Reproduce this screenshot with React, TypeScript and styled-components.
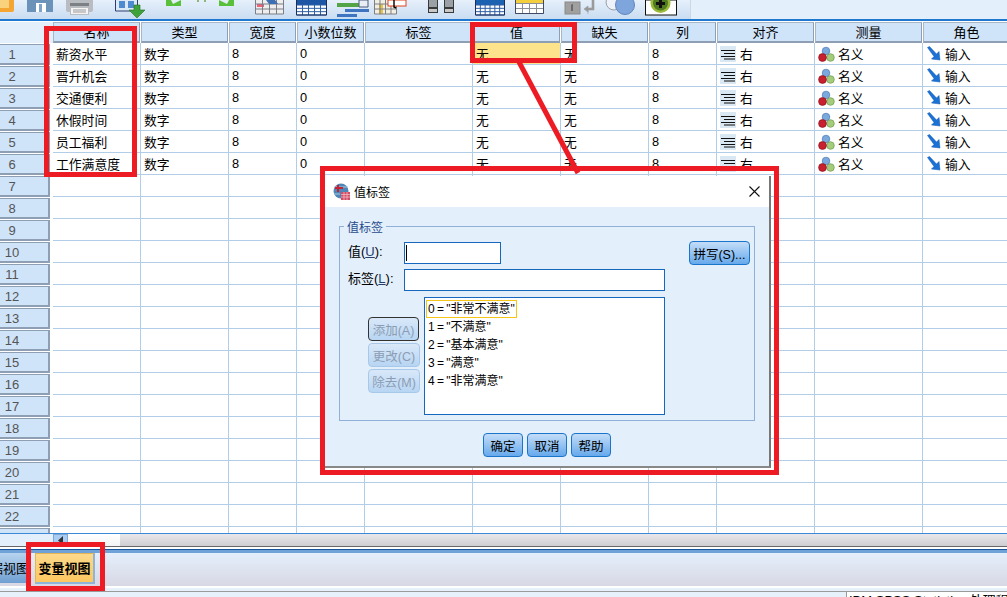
import React from "react";
import styled, { createGlobalStyle } from "styled-components";

const Global = createGlobalStyle`
  html, body { margin: 0; padding: 0; background: #fff; overflow: hidden; }
  * { box-sizing: border-box; }
  body { font-family: "Liberation Sans", "Noto Sans CJK SC", sans-serif; font-size: 13px; color: #000; }
`;

const COLS = [53, 88, 88, 68, 68, 108, 88, 88, 68, 98, 108, 88];

const Page = styled.div`
  position: relative; width: 1007px; height: 597px; overflow: hidden;
  display: flex; flex-direction: column;
`;
const Toolbar = styled.div`
  height: 21px; flex: none; display: flex; overflow: hidden;
  background: #e3effb; border-bottom: 2px solid #1f78cf;
`;
const ToolGroup = styled.div`
  width: 691px; height: 19px; display: flex; align-items: flex-start;
  background: linear-gradient(#e6f0fb, #c9dcf1); border-right: 1px solid #cfd8e2;
`;
const ToolIcon = styled.svg<{ $gap: number }>`
  flex: none; height: 20px; margin-left: ${p => p.$gap}px; display: block;
`;
const Sheet = styled.div`
  height: 512px; flex: none; overflow: hidden; display: grid;
  grid-template-columns: ${COLS.map(c => c + "px").join(" ")};
  grid-template-rows: 22px;
  grid-auto-rows: 22px;
  width: 1011px;
  background: #fff;
`;
const Corner = styled.div`
  margin-top: 1px; background: #e3effb;
`;
const HeadCell = styled.div`
  margin: 1px 1px 0 0; background: #cfe3f9;
  border: 1px solid #8f9fb3; border-top-color: #a9b6c5; border-left-color: #a9b6c5;
  border-bottom-width: 2px; padding-top: 1px;
  display: flex; align-items: center; justify-content: center;
  font-size: 13px; line-height: 18px;
`;
const RowHead = styled.div`
  margin: 1px 1px 0 -2px; background: #cfe3f9;
  border: 1px solid #8f9fb3; border-right-width: 2px; border-bottom-width: 2px;
  color: #555; font-size: 13px; line-height: 19px;
  padding-left: 1px; width: 52px;
`;
const RowNum = styled.span`
  display: block; width: 22px; padding-left: 2px; text-align: center;
`;
const Cell = styled.div<{ $selected?: boolean }>`
  border-right: 1px solid #b1cde8; border-bottom: 1px solid #b1cde8;
  background: ${p => (p.$selected ? "#fde38c" : "#fff")};
  display: flex; align-items: center; gap: 4px;
  padding-left: 3px; font-size: 12.8px; white-space: nowrap; overflow: hidden;
`;
const ScrollRow = styled.div`
  height: 13px; flex: none; display: flex;
  border-top: 1px solid #3b8ad9;
  background: linear-gradient(#e9e7e9, #cfced3);
`;
const ScrollCorner = styled.div`
  width: 53px; background: #e3effb;
`;
const ScrollButton = styled.div`
  width: 15px; background: #a9cdf2; border: 1px solid #7fa9d4;
  display: flex; align-items: center; justify-content: center;
`;
const ScrollThumb = styled.div`
  width: 52px; background: linear-gradient(#fff, #f4f4f6);
`;
const TabBar = styled.div`
  flex: none; height: 42px; display: flex; align-items: flex-start; gap: 5px;
  border-top: 1px solid #666;
  background: linear-gradient(#fff 0 2px, #17539b 2px 3px, #6fa3d8 3px 6px, #e3effb 6px, #d8d8e4 39px, #fff 39px);
  padding-top: 6px;
`;
const DataTab = styled.div`
  width: 30px; height: 30px; overflow: hidden; direction: rtl;
  background: linear-gradient(#b7d3ef, #6f9fd2);
  border-right: 1px solid #7fa9d4;
  display: flex; align-items: center; font-size: 13px; white-space: nowrap;
  padding-bottom: 2px;
`;
const VarTab = styled.div`
  width: 60px; height: 31px;
  background: linear-gradient(#fdd98a, #fdc760);
  border: 1px solid #e6b355; border-bottom: 2px solid #8fb4da; border-right: 2px solid #8fb4da;
  display: flex; align-items: center; justify-content: center;
  font-size: 13px; font-weight: 700; white-space: nowrap;
  padding-bottom: 1px;
`;
const StatusBar = styled.div`
  flex: 1; display: flex; padding-top: 3px; background: #e6f1fb;
`;
const StatusLeft = styled.div`
  width: 846px; flex: none; border-top: 1px solid #9a9a9a;
`;
const StatusRight = styled.div`
  flex: 1; min-width: 0; overflow: hidden; background: #fff;
  border-top: 1px solid #9a9a9a; border-left: 1px solid #9a9a9a;
  padding: 0 0 0 2px; font-size: 13px; line-height: 18px; white-space: nowrap;
`;

const Dialog = styled.div`
  position: absolute; left: 325px; top: 176px; width: 446px; height: 292px;
  background: #e3effb; border-right: 2px solid #777; border-bottom: 2px solid #888;
  display: flex; flex-direction: column;
`;
const TitleBar = styled.div`
  height: 31px; flex: none; background: #fff; display: flex; align-items: center;
  padding: 0 9px 0 8px; gap: 3px; font-size: 12px;
`;
const CloseBtn = styled.svg`
  margin-left: auto; width: 11px; height: 11px; display: block;
`;
const Group = styled.div`
  position: relative; margin: 19px 14px 0 14px; height: 195px;
  border: 1px solid #8fb0d8; padding: 15px 4px 0 0;
  display: flex; flex-direction: column;
`;
const Legend = styled.div`
  position: absolute; left: 4px; top: -5px; padding: 0 3px; background: #e3effb;
  color: #2a4b8c; font-size: 12px; line-height: 13px;
`;
const FieldRow = styled.div`
  display: flex; align-items: flex-start; height: 24px; margin-bottom: 3px;
`;
const FieldLabel = styled.label`
  width: 64px; padding-left: 8px; font-size: 13px; line-height: 20px; white-space: nowrap; flex: none;
`;
const Mnemonic = styled.span`
  color: #243f6b; text-decoration: underline; text-decoration-thickness: 1px;
`;
const TextBox = styled.div<{ $w: number }>`
  width: ${p => p.$w}px; height: 22px; background: #fff; border: 1px solid #1667bd;
  padding: 2px 1px;
`;
const Caret = styled.div`
  width: 1px; height: 16px; background: #000;
`;
const ListRow = styled.div`
  display: flex; align-items: flex-start; margin-top: 1px;
`;
const SideButtons = styled.div`
  margin: 20px 4px 0 28px; width: 52px; display: flex; flex-direction: column; gap: 2px;
`;
const Btn = styled.div<{ $w: number; $off?: boolean; $focus?: boolean }>`
  width: ${p => p.$w}px; height: 24px; flex: none; border-radius: 4px;
  display: flex; align-items: center; justify-content: center;
  font-size: 12.5px; white-space: nowrap;
  color: ${p => (p.$off ? "#8c9db3" : "#000")};
  background: ${p => p.$off ? "linear-gradient(#d9e8f9, #b7d5f3)" : "linear-gradient(#c4ddf8, #66a9ec)"};
  border: 1px solid ${p => (p.$focus ? "#333" : p.$off ? "#a8c8ea" : "#1a74c9")};
`;
const ListBox = styled.div`
  width: 241px; height: 118px; background: #fff; border: 1px solid #1667bd;
  padding: 2px 1px; display: flex; flex-direction: column;
`;
const ListItem = styled.div<{ $active?: boolean }>`
  height: 18px; line-height: 16px; font-size: 12px; word-spacing: -1px; padding: 0 1px; white-space: nowrap;
  align-self: flex-start;
  border: 1px solid ${p => (p.$active ? "#f5c518" : "transparent")};
`;
const Footer = styled.div`
  display: flex; justify-content: center; gap: 4px; margin-top: 12px;
`;
const SpellBtn = styled(Btn)`
  margin-left: auto; margin-top: -1px;
`;
const Frame = styled.div<{ $x: number; $y: number; $w: number; $h: number }>`
  position: absolute; left: ${p => p.$x}px; top: ${p => p.$y}px;
  width: ${p => p.$w}px; height: ${p => p.$h}px;
  border: 5px solid #ed1c24; pointer-events: none;
`;
const Connector = styled.svg`
  position: absolute; left: 510px; top: 60px; width: 80px; height: 115px; pointer-events: none;
`;

const AlignIcon = () => (
  <svg width="16" height="16" viewBox="0 0 16 16" style={{ flex: "none" }}>
    <rect width="16" height="16" fill="#d9e8f2" />
    <path d="M1 4.5h14M4 7.5h11M1 10.5h14M4 13h11" stroke="#111" strokeWidth="1" />
  </svg>
);
const MeasureIcon = () => (
  <svg width="17" height="16" viewBox="0 0 17 16" style={{ flex: "none", marginRight: -1 }}>
    <circle cx="8" cy="5" r="3.8" fill="#7ba9de" stroke="#4a78b0" strokeWidth=".7" />
    <circle cx="12.5" cy="11.5" r="3.8" fill="#a4cc7c" stroke="#6d9a45" strokeWidth=".7" />
    <circle cx="4.5" cy="11.5" r="3.9" fill="#c8202e" stroke="#8d1420" strokeWidth=".7" />
  </svg>
);
const RoleIcon = () => (
  <svg width="16" height="16" viewBox="0 0 16 16" style={{ flex: "none", marginRight: -1 }}>
    <path d="M1.5 1.5 3.5 0.5 10.5 8 13 5.5 14 14 5.5 13 8 10.5Z" fill="#1a72d6" stroke="#0f56ad" strokeWidth=".5" />
  </svg>
);

const Grid = ({ x, y, w, h, cols, rows, c = "#53677f" }: any) => {
  const l = [];
  for (let i = 0; i <= cols; i++) l.push(`M${x + (i * w) / cols} ${y}v${h}`);
  for (let i = 0; i <= rows; i++) l.push(`M${x} ${y + (i * h) / rows}h${w}`);
  return <path d={l.join("")} stroke={c} strokeWidth="1" fill="none" />;
};

const Tools = () => (
  <ToolGroup>
    <ToolIcon $gap={0} width={15} viewBox="0 0 15 20">
      <path d="M0 0h14v10q0 2-2 2H0Z" fill="#f5a531" /><path d="M0 0h9v8H0Z" fill="#fbd27c" />
    </ToolIcon>
    <ToolIcon $gap={12} width={26} viewBox="0 0 26 20">
      <path d="M0 0h26v12H0Z" fill="#6b93ba" /><path d="M9 3h10v9H9Z" fill="#fff" /><path d="M12 4h3v8h-3Z" fill="#7fa4c8" />
    </ToolIcon>
    <ToolIcon $gap={13} width={27} viewBox="0 0 27 20">
      <path d="M0 0h27v10q0 2-2 2h-2v3H4v-3H2q-2 0-2-2Z" fill="#b9bcc0" /><path d="M4 3h19v3H4Z" fill="#7d8185" /><path d="M5 8h17v6H5Z" fill="#f5f5f5" /><path d="M7 10h13M7 12h13" stroke="#999" />
    </ToolIcon>
    <ToolIcon $gap={22} width={33} viewBox="0 0 33 20">
      <path d="M.5 0v11h22V0" fill="#dbe8f6" stroke="#2c3e70" /><path d="M4 1h6v7H4ZM13 1h6v7h-6Z" fill="#4d8ad0" />
      <path d="M19 5h6v5h5l-8 8-8-8h5Z" fill="#3ea33a" stroke="#256f22" strokeWidth=".6" />
    </ToolIcon>
    <ToolIcon $gap={18} width={15} viewBox="0 0 15 20">
      <path d="M0 0h5l2 4 8-4v6H0Z" fill="#58c03a" />
    </ToolIcon>
    <ToolIcon $gap={14} width={12} viewBox="0 0 12 20">
      <path d="M2 0h2v2H2ZM9 0h2v2H9Z" fill="#8cb87a" />
    </ToolIcon>
    <ToolIcon $gap={12} width={15} viewBox="0 0 15 20">
      <path d="M15 0h-5L8 4 0 0v6h15Z" fill="#58c03a" />
    </ToolIcon>
    <ToolIcon $gap={21} width={30} viewBox="0 0 30 20">
      <rect x=".5" y="0" width="28" height="14" fill="#eee" /><rect x="2" y="4" width="7" height="3" fill="#f2617a" />
      <Grid x={0.5} y={-1} w={28} h={15} cols={4} rows={3} c="#7a7f88" /><path d="M11 0h9l3 4H14Z" fill="#3e6fb2" />
    </ToolIcon>
    <ToolIcon $gap={11} width={31} viewBox="0 0 31 20">
      <rect x=".5" y="0" width="30" height="5" fill="#1d56a5" /><rect x=".5" y="5" width="30" height="10" fill="#fff" />
      <Grid x={0.5} y={5} w={30} h={10} cols={5} rows={3} c="#2c5fa5" /><path d="M.5 0v15h30V0" fill="none" stroke="#1c2f5c" />
    </ToolIcon>
    <ToolIcon $gap={10} width={32} viewBox="0 0 32 20">
      <path d="M0 3h22v4H0Z" fill="#53a447" /><path d="M8 9h24v3H8Z" fill="#3f74c0" /><path d="M0 14h20v3H0Z" fill="#3f74c0" /><path d="M22 0h9v7h-9Z" fill="#e8eef6" stroke="#4a5a78" />
    </ToolIcon>
    <ToolIcon $gap={5} width={33} viewBox="0 0 33 20">
      <rect x=".5" y="0" width="22" height="14" fill="#f1eee2" /><rect x="5" y="4" width="4" height="10" fill="#e7c44d" />
      <Grid x={0.5} y={-1} w={22} h={15} cols={4} rows={3} c="#7d7f84" /><rect x="14" y="0" width="18" height="6" fill="#fff" stroke="#e0401c" /><path d="M20 0v7l2 1" stroke="#000" strokeWidth="1.4" fill="none" />
    </ToolIcon>
    <ToolIcon $gap={21} width={27} viewBox="0 0 27 20">
      <path d="M0 0h10v13H0ZM16 0h10v13H16Z" fill="#3a3a3a" /><path d="M1 0h8v7H1ZM17 0h8v7h-8Z" fill="#9aa0a6" /><path d="M1 9h8v3H1ZM17 9h8v3h-8Z" fill="#c8c8c8" />
    </ToolIcon>
    <ToolIcon $gap={20} width={31} viewBox="0 0 31 20">
      <rect x=".5" y="0" width="29" height="5" fill="#1c62b3" /><rect x=".5" y="5" width="29" height="10" fill="#fff" />
      <Grid x={0.5} y={5} w={29} h={10} cols={6} rows={3} c="#2c5fa5" /><path d="M.5 0v15h29V0" fill="none" stroke="#1c2f5c" />
    </ToolIcon>
    <ToolIcon $gap={9} width={29} viewBox="0 0 29 20">
      <rect x=".5" y="0" width="28" height="4" fill="#f4cf3d" /><rect x=".5" y="4" width="28" height="9.5" fill="#fff" />
      <Grid x={0.5} y={3.5} w={28} h={10} cols={4} rows={2} c="#8a8f98" /><path d="M.5 0v13.5h28V0" fill="none" stroke="#3e4a66" />
    </ToolIcon>
    <ToolIcon $gap={20} width={32} viewBox="0 0 32 20">
      <rect x="1" y="2" width="15" height="12" fill="#a0a0a0" stroke="#8a8a8a" /><path d="M8 4l-1 1v6h2V4Z" fill="#6b6b6b" />
      <path d="M20 9l4-3v2h4V0h2v10h-6v2Z M24 10v4" fill="#9a9a9a" stroke="#9a9a9a" strokeWidth=".6" />
    </ToolIcon>
    <ToolIcon $gap={9} width={32} viewBox="0 0 32 20">
      <circle cx="9" cy="2" r="8" fill="#edf3f9" stroke="#9aa0a6" /><circle cx="20" cy="5" r="9.5" fill="#7ea6dd" stroke="#5e86bd" />
    </ToolIcon>
    <ToolIcon $gap={8} width={33} viewBox="0 0 33 20">
      <rect x=".5" y="0" width="31" height="15" fill="#fff" stroke="#111" /><circle cx="15.5" cy="3" r="10" fill="#9cba3a" /><circle cx="15.5" cy="3" r="7.5" fill="#4f7a1f" />
      <path d="M14 0h3v2h3v3h-3v3h-3V5h-3V2h3Z" fill="#111" />
    </ToolIcon>
  </ToolGroup>
);

const HEADS = ["名称", "类型", "宽度", "小数位数", "标签", "值", "缺失", "列", "对齐", "测量", "角色"];
const NAMES = ["薪资水平", "晋升机会", "交通便利", "休假时间", "员工福利", "工作满意度"];
const VALUES = ['0 = "非常不满意"', '1 = "不满意"', '2 = "基本满意"', '3 = "满意"', '4 = "非常满意"'];

const DataRow = ({ n }: { n: number }) => {
  const name = NAMES[n - 1];
  return (
    <>
      <RowHead>{n <= 22 && <RowNum>{n}</RowNum>}</RowHead>
      {name ? (
        <>
          <Cell>{name}</Cell>
          <Cell>数字</Cell>
          <Cell>8</Cell>
          <Cell>0</Cell>
          <Cell />
          <Cell $selected={n === 1}>无</Cell>
          <Cell>无</Cell>
          <Cell>8</Cell>
          <Cell><AlignIcon />右</Cell>
          <Cell><MeasureIcon />名义</Cell>
          <Cell><RoleIcon />输入</Cell>
        </>
      ) : (
        HEADS.map(h => <Cell key={h} />)
      )}
    </>
  );
};

export default function App() {
  return (
    <Page>
      <Global />
      <Toolbar><Tools /></Toolbar>
      <Sheet>
        <Corner />
        {HEADS.map(h => <HeadCell key={h}>{h}</HeadCell>)}
        {Array.from({ length: 23 }, (_, i) => <DataRow key={i} n={i + 1} />)}
      </Sheet>
      <ScrollRow>
        <ScrollCorner />
        <ScrollButton>
          <svg width="6" height="9" viewBox="0 0 6 9"><path d="M5 0v9L0 4.5Z" fill="#333" /></svg>
        </ScrollButton>
        <ScrollThumb />
      </ScrollRow>
      <TabBar>
        <DataTab>数据视图</DataTab>
        <VarTab>变量视图</VarTab>
      </TabBar>
      <StatusBar>
        <StatusLeft />
        <StatusRight>IBM SPSS Statistics 处理程序就绪</StatusRight>
      </StatusBar>

      <Dialog>
        <TitleBar>
          <svg width="18" height="18" viewBox="0 0 18 18">
            <circle cx="8" cy="8" r="7.5" fill="#4f86b8" />
            <path d="M1 4h14M1 11h6" stroke="#a8c8e0" />
            <path d="M2 5h8M5 2v7" stroke="#c8202e" strokeWidth="2" />
            <rect x="8" y="9" width="9" height="8" fill="#d64a63" />
            <path d="M8 11.5h9M8 14h9M11 9v8M14 9v8" stroke="#f4c8d0" strokeWidth=".7" />
          </svg>
          值标签
          <CloseBtn viewBox="0 0 11 11"><path d="M.5.5l10 10M10.5.5l-10 10" stroke="#111" strokeWidth="1.1" /></CloseBtn>
        </TitleBar>
        <Group>
          <Legend>值标签</Legend>
          <FieldRow>
            <FieldLabel>值(<Mnemonic>U</Mnemonic>):</FieldLabel>
            <TextBox $w={97}><Caret /></TextBox>
            <SpellBtn $w={61}>拼写(S)...</SpellBtn>
          </FieldRow>
          <FieldRow>
            <FieldLabel>标签(<Mnemonic>L</Mnemonic>):</FieldLabel>
            <TextBox $w={261} />
          </FieldRow>
          <ListRow>
            <SideButtons>
              <Btn $w={51} $off $focus>添加(A)</Btn>
              <Btn $w={52} $off>更改(C)</Btn>
              <Btn $w={52} $off>除去(M)</Btn>
            </SideButtons>
            <ListBox>
              {VALUES.map((v, i) => <ListItem key={v} $active={i === 0}>{v}</ListItem>)}
            </ListBox>
          </ListRow>
        </Group>
        <Footer>
          <Btn $w={40}>确定</Btn>
          <Btn $w={40}>取消</Btn>
          <Btn $w={40}>帮助</Btn>
        </Footer>
      </Dialog>

      <Connector viewBox="510 60 80 115">
        <path d="M519 62 578 173" stroke="#ed1c24" strokeWidth="5" fill="none" />
      </Connector>
      <Frame $x={44} $y={26} $w={93} $h={151} />
      <Frame $x={470} $y={22} $w={107} $h={41} />
      <Frame $x={320} $y={166} $w={459} $h={309} />
      <Frame $x={26} $y={542} $w={79} $h={49} />
    </Page>
  );
}
